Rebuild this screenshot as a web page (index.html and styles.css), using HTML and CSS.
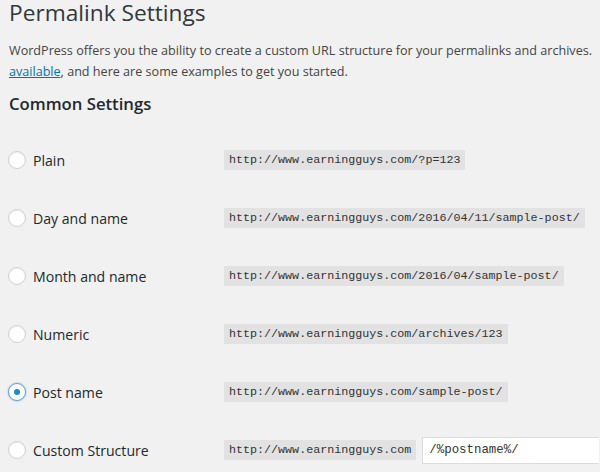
FILE: index.html
```html
<!DOCTYPE html>
<html lang="en">
<head>
<meta charset="utf-8">
<title>Permalink Settings</title>
<link rel="stylesheet" href="styles.css">
</head>
<body>
<div class="wrap">
  <h1 class="title">Permalink Settings</h1>
  <p class="intro">WordPress offers you the ability to create a custom URL structure for your permalinks and archives.<br><a href="#">available</a>, and here are some examples to get you started.</p>
  <h2 class="section">Common Settings</h2>
  <div class="options">
    <div class="row">
      <label class="opt"><span class="radio"></span>Plain</label>
      <div class="val"><code>http://www.earningguys.com/?p=123</code></div>
    </div>
    <div class="row">
      <label class="opt"><span class="radio"></span>Day and name</label>
      <div class="val"><code>http://www.earningguys.com/2016/04/11/sample-post/</code></div>
    </div>
    <div class="row">
      <label class="opt"><span class="radio"></span>Month and name</label>
      <div class="val"><code>http://www.earningguys.com/2016/04/sample-post/</code></div>
    </div>
    <div class="row">
      <label class="opt"><span class="radio"></span>Numeric</label>
      <div class="val"><code>http://www.earningguys.com/archives/123</code></div>
    </div>
    <div class="row">
      <label class="opt"><span class="radio checked"></span>Post name</label>
      <div class="val"><code>http://www.earningguys.com/sample-post/</code></div>
    </div>
    <div class="row">
      <label class="opt"><span class="radio"></span>Custom Structure</label>
      <div class="val"><code>http://www.earningguys.com</code><span class="field">/%postname%/</span></div>
    </div>
  </div>
</div>
</body>
</html>
```

FILE: styles.css
```css
html, body {
  margin: 0;
  padding: 0;
  background: #f1f1f1;
}
body {
  font-family: "Open Sans", "DejaVu Sans", sans-serif;
  color: #23282d;
  overflow: hidden;
}
.wrap {
  padding-left: 9px;
}
.title {
  margin: 0;
  font-size: 22.7px;
  line-height: 26px;
  font-weight: 400;
  color: #32373c;
}
.intro {
  margin: 14px 0 0;
  font-size: 12.6px;
  line-height: 21px;
  color: #444;
  white-space: nowrap;
}
.intro a {
  color: #0073aa;
  text-decoration: underline;
}
.section {
  margin: 10px 0 0;
  font-size: 16.7px;
  line-height: 24px;
  font-weight: 600;
  color: #23282d;
}
.options {
  margin-top: 15px;
}
.row {
  display: grid;
  grid-template-columns: 215px auto;
  align-items: center;
  height: 58px;
}
.opt {
  display: flex;
  align-items: center;
  gap: 7px;
  font-size: 14.1px;
  color: #23282d;
  margin-left: -1px;
}
.radio {
  width: 16px;
  height: 16px;
  border-radius: 50%;
  border: 1px solid #cdd0d3;
  background: #fff;
  box-shadow: inset 0 1px 2px rgba(0,0,0,0.07);
  display: flex;
  align-items: center;
  justify-content: center;
  box-sizing: content-box;
}
.radio.checked {
  border-color: #6d9fc9;
  box-shadow: 0 0 2px rgba(30,140,190,0.6);
}
.radio.checked::after {
  content: "";
  width: 6px;
  height: 6px;
  border-radius: 50%;
  background: #1e8cbe;
}
.val {
  display: flex;
  align-items: center;
}
code {
  font-family: "Liberation Mono", "DejaVu Sans Mono", monospace;
  font-size: 11.7px;
  line-height: 20px;
  background: #e2e2e2;
  color: #333;
  padding: 0 5px;
  white-space: nowrap;
}
.field {
  margin-left: 6px;
  font-family: "Liberation Mono", "DejaVu Sans Mono", monospace;
  font-size: 12.4px;
  line-height: 25px;
  height: 25px;
  width: 170px;
  padding: 0 0 0 6px;
  background: #fff;
  border: 1px solid #dcdcdc;
  border-right: none;
  color: #333;
}
```
